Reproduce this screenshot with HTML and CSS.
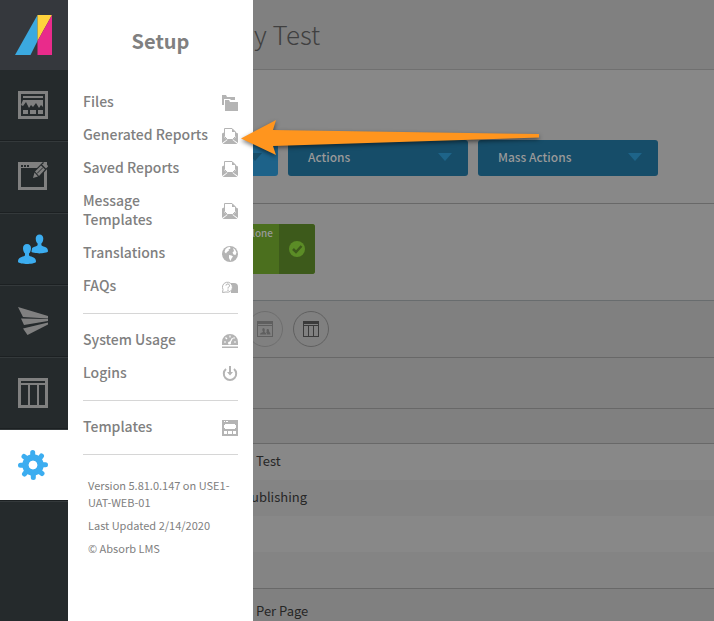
FILE: index.html
```html
<!DOCTYPE html>
<html lang="en">
<head>
  <meta charset="UTF-8">
  <meta name="viewport" content="width=device-width, initial-scale=1">
  <title>Setup - Absorb LMS</title>
  <link rel="stylesheet" href="styles.css">
</head>
<body>

  <!-- Shared icons -->
  <svg class="sprite" aria-hidden="true">
    <symbol id="icon-report" viewBox="0 0 16 16">
      <path d="M2.500 8.500V.5H10l3.500 3.500v4.500l-3 3h-5z" fill="#fff" stroke="#b4b4b4"/>
      <path d="M10 .5v3.500h3.500z" fill="#b4b4b4"/>
      <path d="M0 5.500L2 4.500v4.500l3 2.500L0 15z M16 5.500l-2-1v4.500l-3 2.500 5 3.500z M.5 16L6 11.500h4l5.500 4.500z" fill="#b4b4b4"/>
    </symbol>
    <symbol id="icon-person" viewBox="0 0 18 20">
      <path d="M9 0c2.600 0 4 1.800 4 4.200 0 2.800-1 4.300-2 5.200v1.600c0 1 1.500 1.300 4 2.200 2.300.9 3 2.300 3 4.800 0 1-6 2-9 2s-9-1-9-2c0-2.500.7-3.900 3-4.800 2.500-.9 4-1.200 4-2.200V9.400C6 8.500 5 7 5 4.200 5 1.800 6.400 0 9 0z"/>
    </symbol>
  </svg>

  <div class="app">
    <nav class="sidebar">
      <a class="logo" href="#" aria-label="Absorb">
        <svg width="38" height="40" viewBox="0 0 38 40">
          <path d="M22.500 0v26L15.500 40H0z" fill="#3ba9e0"/>
          <path d="M22.500 0H37L22.500 26z" fill="#ffd23c"/>
          <path d="M37 0v40H22.500V26z" fill="#e92b8b"/>
        </svg>
      </a>
      <a class="nav-item" href="#" aria-label="Dashboard">
        <svg width="30" height="30" viewBox="0 0 30 30" fill="#808080">
          <path d="M0 1h30v28H0z M3 4v22h24V4z" fill-rule="evenodd"/>
          <path d="M5 6h20v2H5z M5 10h20v7l-2-2-2 3-3-5-3 4-2-2-2 3-3-6-3 4-2-1z M5 20h5v4H5z M12 20h6v4h-6z M20 20h5v4h-5z"/>
        </svg>
      </a>
      <a class="nav-item" href="#" aria-label="Courses">
        <svg width="30" height="30" viewBox="0 0 30 30">
          <path d="M0 0h29v28H0z M3 6v19h23V6z" fill="#808080" fill-rule="evenodd"/>
          <path d="M3 3h2v2H3z M6 3h2v2H6z M9 3h2v2H9z" fill="#252a2c"/>
          <path d="M14 16l2-7L25 0l6 5-9 10-7 3z" fill="#252a2c"/>
          <path d="M15 16l1.500-5.500 3.500 4z M17 9.500l6-6 4 4-6 6.500z M24 2.500l2-1.500c1.500 0 4 2 4 3.500L28 6.500z" fill="#808080"/>
          <path d="M19 11.500l6-6" stroke="#252a2c" stroke-width="1"/>
        </svg>
      </a>
      <a class="nav-item" href="#" aria-label="Users">
        <svg width="30" height="30" viewBox="0 0 30 30" fill="#3cadf0">
          <use href="#icon-person" x="13" y="0" width="17" height="20"/>
          <use href="#icon-person" x="0" y="10" width="18" height="20" stroke="#252a2c" stroke-width="2"/>
          <use href="#icon-person" x="0" y="10" width="18" height="20"/>
        </svg>
      </a>
      <a class="nav-item" href="#" aria-label="Messages">
        <svg width="30" height="30" viewBox="0 0 30 30" fill="#808080">
          <path d="M0 1l30 9v2.500L5 11z M3 12.500l27 .5v2L6 19z M5 22.500L30 16.500v2L9.500 29z"/>
        </svg>
      </a>
      <a class="nav-item" href="#" aria-label="Reports">
        <svg width="30" height="30" viewBox="0 0 30 30" fill="#808080">
          <path d="M0 0h30v30H0z M3 3v2h24V3z M3 7v20h7V7z M12 7v20h7V7z M21 7v20h6V7z" fill-rule="evenodd"/>
        </svg>
      </a>
      <a class="nav-item active" href="#" aria-label="Setup">
        <svg width="30" height="30" viewBox="0 0 30 30">
          <circle cx="15" cy="15" r="7.500" fill="none" stroke="#3cadf0" stroke-width="6.500"/>
          <g stroke="#3cadf0" stroke-width="5" stroke-linecap="round">
            <path d="M14.700 5V2.500M15.300 25v2.500M5 15.300H2.500M25 14.700h2.500M8 8L6 6.500M22 22l2 1.500M22 8l1.500-2M8 22l-1.500 2"/>
          </g>
          <circle cx="15" cy="15" r="4.300" fill="#fff"/>
        </svg>
      </a>
    </nav>

    <main class="content">
      <header class="page-header">
        <h1>y Test</h1>
      </header>

      <section class="actions">
        <button class="btn btn-light" type="button" aria-label="Add"><span class="caret"></span></button>
        <button class="btn" type="button">Actions <span class="caret"></span></button>
        <button class="btn" type="button">Mass Actions <span class="caret"></span></button>
      </section>

      <section class="filters">
        <div class="filter">
          <span class="filter-name">lone</span>
          <button class="filter-apply" type="button" aria-label="Apply">
            <svg width="16" height="16" viewBox="0 0 16 16">
              <circle cx="8" cy="8" r="8" fill="#5b8c26"/>
              <path d="M4 8l3 3 5.500-6" fill="none" stroke="#3d5a1b" stroke-width="2.500"/>
            </svg>
          </button>
        </div>
      </section>

      <section class="view-tools">
        <button class="round round-dim" type="button" aria-label="Users">
          <svg width="16" height="16" viewBox="0 0 16 16" fill="#5f5f5f">
            <path d="M0 0h16v16H0z M1 3v1h14V3z M1 5v10h14V5z" fill-rule="evenodd"/>
            <path d="M3 13.500c0-2 3-1.500 3-3C5 9.500 5 7 6.500 7S8 9.500 7.500 10.500c0 1.500 2 1 2 3z M10 13.500c0-2-1-2-1-2.500 1-.3 1-.7.500-1.500 0-2 2.500-2 2.500 0 0 2 1.500 1.500 1.500 4z"/>
          </svg>
        </button>
        <button class="round" type="button" aria-label="Columns">
          <svg width="16" height="16" viewBox="0 0 16 16" fill="#3a3a3a">
            <path d="M0 0h16v16H0z M1 3v1h14V3z M1 5v10h4V5z M6 5v10h4V5z M11 5v10h4V5z" fill-rule="evenodd"/>
          </svg>
        </button>
      </section>

      <div class="grid-group"></div>
      <div class="grid-head"></div>
      <table class="grid">
        <tbody>
          <tr><td>Test</td></tr>
          <tr><td>ublishing</td></tr>
          <tr><td></td></tr>
          <tr><td></td></tr>
        </tbody>
      </table>
      <footer class="pager">Per Page</footer>
    </main>

    <!-- Setup menu, opens over the page -->
    <aside class="menu">
      <h2>Setup</h2>
      <ul>
        <li><a href="#"><span>Files</span>
          <svg width="16" height="16" viewBox="0 0 16 16" fill="#b4b4b4">
            <path d="M0 0h4l1 2h8v3H9L8 4H2v6H0z M3 5h4l1 2h8v9H3z"/>
          </svg></a></li>
        <li><a href="#"><span>Generated Reports</span><svg width="16" height="16"><use href="#icon-report"/></svg></a></li>
        <li><a href="#"><span>Saved Reports</span><svg width="16" height="16"><use href="#icon-report"/></svg></a></li>
        <li><a href="#"><span>Message Templates</span><svg width="16" height="16"><use href="#icon-report"/></svg></a></li>
        <li><a href="#"><span>Translations</span>
          <svg width="16" height="16" viewBox="0 0 16 16">
            <circle cx="8" cy="8" r="8" fill="#b4b4b4"/>
            <path d="M5.500 1.500L8 .8l.5 1.700-2 1 .5 1-2 1.500-1 1.500L2.500 6l1-3z M7 9l2.500.5 1.500 1-1.500 2-1 2.500L7 12z M11 2l2 1.500 1.500 3-1 2.500-2-.5-1-2 1.500-1.500z" fill="#fff"/>
          </svg></a></li>
        <li><a href="#"><span>FAQs</span>
          <svg width="16" height="16" viewBox="0 0 16 16">
            <path d="M9 4h3a4 4 0 0 1 4 4v6H9z" fill="#b4b4b4"/>
            <path d="M.5 13.500l.5-3A5 5 0 1 1 4 13z" fill="#fff" stroke="#b4b4b4"/>
            <path d="M4 6.500c0-2 3.500-2 3.500 0C7.500 8 6 7.800 6 9.500M6 10.500V12" fill="none" stroke="#a8a8a8"/>
          </svg></a></li>
      </ul>
      <ul>
        <li><a href="#"><span>System Usage</span>
          <svg width="16" height="16" viewBox="0 0 16 16">
            <path d="M0 12V9a8 8 0 0 1 16 0v3z M0 13.500h16V15H0z" fill="#b4b4b4"/>
            <path d="M2 9h2M12 9h2M3.500 4.500L5 6M8 2.500v2M12.500 4.500l-1 1M7.500 10.500L10.500 5" stroke="#fff" stroke-width="1.200"/>
            <circle cx="7.500" cy="10" r="1.500" fill="#fff"/>
          </svg></a></li>
        <li><a href="#"><span>Logins</span>
          <svg width="16" height="16" viewBox="0 0 16 16" fill="none" stroke="#b4b4b4" stroke-width="2">
            <path d="M4 3a6.200 6.200 0 1 0 8 0M8 0v7"/>
            <path d="M5 6h6L8 9.500z" fill="#b4b4b4" stroke="none"/>
          </svg></a></li>
      </ul>
      <ul>
        <li><a href="#"><span>Templates</span>
          <svg width="16" height="16" viewBox="0 0 16 16">
            <path d="M0 0h16v16H0z" fill="#b4b4b4"/>
            <path d="M2 1h1v1H2z M4 1h2v1H4z M3 4h10v1h1v3h-1v1H3V8H2V5h1z M2 11h3v3H2z M6 11h4v3H6z M11 11h3v3h-3z" fill="#fff"/>
          </svg></a></li>
      </ul>
      <div class="version">
        <p>Version 5.81.0.147 on USE1-UAT-WEB-01</p>
        <p>Last Updated 2/14/2020</p>
        <p>© Absorb LMS</p>
      </div>
    </aside>

    <svg class="pointer" width="300" height="38" viewBox="0 0 300 38" aria-hidden="true">
      <path d="M0 18.500L35 0l-3 10 266 4v3.500L32 26l3 9z" fill="#ff951e"/>
    </svg>
  </div>

</body>
</html>
```

FILE: styles.css
```css
* {
  box-sizing: border-box;
}
body {
  margin: 0;
  font-family: "Noto Sans CJK SC", "Noto Sans", sans-serif;
  font-size: 13px;
  line-height: 18px;
  color: #262626;
}
h1, h2, p, ul {
  margin: 0;
  padding: 0;
}
button {
  font: inherit;
  border: none;
  cursor: pointer;
}
a {
  color: inherit;
  text-decoration: none;
}
svg {
  display: block;
  flex-shrink: 0;
}
.sprite {
  position: absolute;
  width: 0;
  height: 0;
}
.app {
  position: relative;
  display: flex;
  min-height: 100vh;
}

/* Sidebar */
.sidebar {
  width: 68px;
  flex-shrink: 0;
  background: #252a2c;
}
.logo {
  display: flex;
  align-items: center;
  height: 70px;
  padding-left: 15px;
  background: #35383d;
}
.nav-item {
  display: flex;
  align-items: center;
  height: 72px;
  padding: 0 0 1px 18px;
  border-bottom: 1px solid #34393b;
  box-shadow: inset 0 -1px #1c2022;
}
.nav-item.active {
  background: #fff;
}

/* Page behind the menu */
.content {
  display: flex;
  flex-direction: column;
  flex: 1;
  min-width: 0;
  background: #888;
}
.page-header {
  height: 70px;
  padding: 18px 0 0 186px;
  background: #808080;
  border-bottom: 1px solid #707070;
}
.page-header h1 {
  font-size: 26px;
  line-height: 32px;
  font-weight: 300;
  color: #404040;
}
.actions {
  display: flex;
  gap: 10px;
  padding: 70px 30px 27px;
  border-bottom: 1px solid #686868;
}
.btn {
  display: flex;
  align-items: center;
  justify-content: space-between;
  width: 180px;
  height: 36px;
  padding: 0 16px 2px 20px;
  border-radius: 3px;
  background: #164d69;
  color: #999;
  font-size: 12px;
  font-weight: 500;
}
.caret {
  margin-left: auto;
  border: 7px solid transparent;
  border-top: 8px solid #1e6489;
  border-bottom: none;
}
.btn-light {
  background: #1d6289;
}
.btn-light .caret {
  border-top-color: #164d69;
}
.filters {
  padding: 20px 30px 26px;
  border-bottom: 1px solid #686c6e;
}
.filter {
  display: flex;
  justify-content: flex-end;
  width: 217px;
  height: 50px;
  border-radius: 3px;
  overflow: hidden;
  background: #4b6f1e;
}
.filter-name {
  padding-right: 6px;
  font-size: 10px;
  line-height: 17px;
  font-weight: 500;
  color: #999;
}
.filter-apply {
  display: flex;
  align-items: center;
  justify-content: center;
  width: 36px;
  padding: 0;
  background: #3d5a1b;
}
.view-tools {
  display: flex;
  gap: 10px;
  padding: 10px 30px 10px 179px;
  background: #808080;
  border-bottom: 1px solid #686868;
}
.round {
  display: flex;
  align-items: center;
  justify-content: center;
  width: 36px;
  height: 36px;
  padding: 0;
  border: 1px solid #606060;
  border-radius: 50%;
  background: none;
}
.round-dim {
  border-color: #6e6e6e;
}

/* Grid */
.grid-group {
  height: 51px;
  background: #808080;
  border-bottom: 1px solid #686868;
}
.grid-head {
  height: 35px;
  background: #808080;
  border-bottom: 1px solid #686868;
}
.grid {
  width: 100%;
  border-collapse: collapse;
  border-bottom: 1px solid #686868;
}
.grid td {
  height: 36px;
  padding: 0 0 2px 183px;
}
.grid tr:first-child td {
  padding-left: 188px;
}
.grid tr:nth-child(even) {
  background: #848484;
}
.pager {
  flex: 1;
  padding: 13px 0 0 188px;
  background: #808080;
}

/* Setup menu */
.menu {
  position: absolute;
  top: 0;
  bottom: 0;
  left: 68px;
  width: 185px;
  padding: 25px 15px;
  background: #fff;
  color: #808080;
}
.menu h2 {
  padding-bottom: 19px;
  font-size: 20px;
  line-height: 32px;
  text-align: center;
}
.menu ul {
  padding: 10px 0;
  border-bottom: 1px solid #d6d6d6;
  list-style: none;
}
.menu li a {
  display: flex;
  align-items: center;
  justify-content: space-between;
  gap: 12px;
  padding: 6px 0 8px;
  font-size: 14px;
  line-height: 19px;
  font-weight: 500;
}
.menu li svg {
  margin-top: 2px;
}
.version {
  padding: 22px 5px 0;
  font-size: 11px;
  line-height: 17px;
}
.version p {
  margin-bottom: 6px;
}

/* Callout arrow */
.pointer {
  position: absolute;
  top: 120px;
  left: 241px;
  overflow: visible;
  filter: drop-shadow(0 2px 2px rgba(0, 0, 0, 0.5));
}
```
